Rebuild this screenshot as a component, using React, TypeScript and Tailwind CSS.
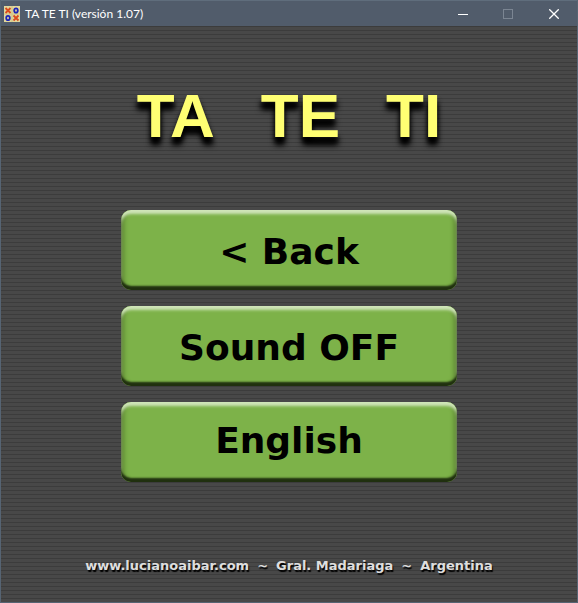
import React from "react";

function AppIcon() {
  return (
    <svg width="16" height="16" viewBox="0 0 16 16" aria-hidden="true">
      <rect width="16" height="16" fill="#e2d79c" />
      <path d="M8 0v16M0 8h16" stroke="#cfc486" />
      <g fill="none" strokeWidth="1.8">
        <path d="M1.500 2l5 5M6.500 2l-5 5M9.500 9.500l5 5M14.500 9.500l-5 5" stroke="#dc4a1c" />
        <ellipse cx="12" cy="4.500" rx="1.800" ry="2.200" stroke="#1c24b8" />
        <ellipse cx="4" cy="12" rx="1.800" ry="2.200" stroke="#1c24b8" />
      </g>
    </svg>
  );
}

function TitleBar() {
  return (
    <header className="flex h-[26px] items-center border-t border-[#5f6d7c] bg-[#515c6b] pl-[3px]">
      <AppIcon />
      <span className="ml-[5px] flex-1 whitespace-nowrap font-['Lato','Open_Sans',sans-serif] text-[12px] leading-4 text-white">
        TA TE TI (versión 1.07)
      </span>
      <button type="button" aria-label="Minimize" className="grid h-full w-[44px] place-items-center">
        <svg width="10" height="10" viewBox="0 0 10 10" shapeRendering="crispEdges">
          <path d="M0 5.500h10" stroke="#fff" />
        </svg>
      </button>
      <button type="button" aria-label="Maximize" disabled className="grid h-full w-[46px] place-items-center">
        <svg width="10" height="10" viewBox="0 0 10 10" shapeRendering="crispEdges">
          <path d="M.5 .5h9v9h-9z" fill="none" stroke="#7b8592" />
        </svg>
      </button>
      <button type="button" aria-label="Close" className="grid h-full w-[46px] place-items-center">
        <svg width="10" height="10" viewBox="0 0 10 10">
          <path d="M.3 .3l9.400 9.400M9.700 .3L.3 9.700" stroke="#fff" strokeWidth="1.300" />
        </svg>
      </button>
    </header>
  );
}

function MenuButton({ children, className = "pt-1" }: { children: React.ReactNode; className?: string }) {
  return (
    <button
      type="button"
      className={`h-20 w-full rounded-[10px] bg-[#7db249] font-['DejaVu_Sans',Verdana,sans-serif] text-[36px] leading-[44px] font-bold text-black shadow-[inset_0_-4px_2px_#20300f,inset_0_4px_3px_#cfe5b8,inset_3px_0_4px_#5a8331,inset_-3px_0_4px_#5a8331] ${className}`}
    >
      {children}
    </button>
  );
}

const words = ["TA", "TE", "TI"];

export default function App() {
  return (
    <div className="flex min-h-screen flex-col border-x border-b border-[#566473] bg-[#484848]">
      <TitleBar />
      <main className="flex flex-1 flex-col items-center bg-[repeating-linear-gradient(to_bottom,#3c3c3c_0px,#3c3c3c_1px,#484848_1px,#484848_4px)] pt-[54px]">
        <h1 className="flex gap-[46px] font-['Liberation_Sans',Arial,sans-serif] text-[62px] leading-[72px] font-bold text-[#ffff73] [text-shadow:0_6px_5px_#000,0_8px_6px_#000]">
          {words.map((word) => (
            <span key={word}>{word}</span>
          ))}
        </h1>
        <nav className="mt-[58px] flex w-full max-w-[336px] flex-col gap-4">
          <MenuButton>&lt; Back</MenuButton>
          <MenuButton>Sound OFF</MenuButton>
          <MenuButton className="pb-0.5">English</MenuButton>
        </nav>
        <footer className="mt-auto flex gap-2 pb-7 font-['DejaVu_Sans',Verdana,sans-serif] text-[13px] leading-4 font-bold whitespace-nowrap text-[#dedede] [text-shadow:1px_2px_1px_#000]">
          <a href="http://www.lucianoaibar.com">www.lucianoaibar.com</a>
          <span>~</span>
          <span>Gral. Madariaga</span>
          <span>~</span>
          <span>Argentina</span>
        </footer>
      </main>
    </div>
  );
}
